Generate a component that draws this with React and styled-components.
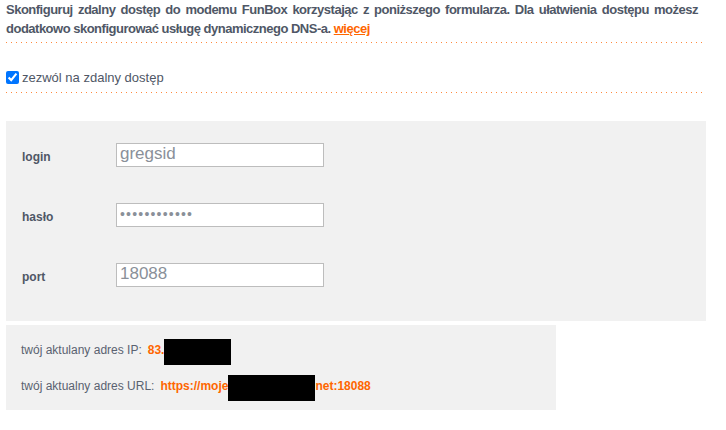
import React from "react";
import styled, { createGlobalStyle } from "styled-components";

const Global = createGlobalStyle`
  html, body { margin: 0; padding: 0; background: #fff; }
  body { font-family: "Liberation Sans", Arial, sans-serif; }
`;

const Page = styled.div`
  width: 726px;
  height: 430px;
  padding: 0 6px;
  box-sizing: border-box;
  overflow: hidden;
`;

const Intro = styled.p`
  margin: 0;
  width: 692px;
  font-size: 13px;
  font-weight: bold;
  line-height: 19px;
  letter-spacing: -0.5px;
  text-align: justify;
  color: #4f5766;
`;

const MoreLink = styled.a`
  color: #ff6600;
  text-decoration: underline;
`;

const Dotted = styled.div`
  width: 696px;
  height: 1px;
  margin-top: ${(p) => p.$top}px;
  background-image: linear-gradient(to right, #ff8a3d 1px, transparent 1px);
  background-size: 5px 1px;
  background-repeat: repeat-x;
`;

const CheckRow = styled.label`
  display: flex;
  align-items: center;
  gap: 3px;
  margin-top: 27px;
  font-size: 13px;
  color: #4f5766;
`;

const Check = styled.input`
  margin: 0;
  width: 13px;
  height: 13px;
  accent-color: #0075ff;
`;

const FormBox = styled.div`
  margin-top: 28px;
  width: 700px;
  height: 200px;
  box-sizing: border-box;
  background: #f1f1f1;
  padding: 22px 0 0 16px;
  display: flex;
  flex-direction: column;
  gap: 36px;
`;

const FieldRow = styled.div`
  display: flex;
  align-items: center;
`;

const FieldLabel = styled.span`
  width: 94px;
  font-size: 12px;
  font-weight: bold;
  color: #4f5766;
  padding-top: 4px;
`;

const TextField = styled.input`
  width: 208px;
  height: 24px;
  box-sizing: border-box;
  margin: 0;
  border: 1px solid #bdbdbd;
  background: #fff;
  padding: 0 0 3px 3px;
  font-family: "Liberation Sans", Arial, sans-serif;
  font-size: ${(p) => (p.type === "password" ? "14px" : "17px")};
  letter-spacing: ${(p) => (p.type === "password" ? "1.2px" : "0")};
  color: #8a9099;
  outline: none;
`;

const InfoBox = styled.div`
  margin-top: 4px;
  width: 550px;
  height: 85px;
  box-sizing: border-box;
  background: #f1f1f1;
  padding: 16px 0 0 15px;
  display: flex;
  flex-direction: column;
  gap: 18px;
`;

const InfoRow = styled.div`
  display: flex;
  align-items: center;
  height: 18px;
  font-size: 12px;
  color: #5a6270;
`;

const InfoValue = styled.span`
  margin-left: 6px;
  font-weight: bold;
  color: #ff6600;
  display: flex;
  align-items: center;
`;

const Redact = styled.span`
  display: inline-block;
  width: ${(p) => p.$w}px;
  height: 26px;
  background: #000;
  margin-top: ${(p) => p.$dy}px;
`;

export default function App() {
  return (
    <>
      <Global />
      <Page>
        <Intro>
          Skonfiguruj zdalny dostęp do modemu FunBox korzystając z poniższego formularza. Dla ułatwienia dostępu możesz
          dodatkowo skonfigurować usługę dynamicznego DNS-a. <MoreLink href="#">więcej</MoreLink>
        </Intro>
        <Dotted $top={4} />
        <CheckRow>
          <Check type="checkbox" defaultChecked />
          zezwól na zdalny dostęp
        </CheckRow>
        <Dotted $top={7} />
        <FormBox>
          <FieldRow>
            <FieldLabel>login</FieldLabel>
            <TextField type="text" defaultValue="gregsid" />
          </FieldRow>
          <FieldRow>
            <FieldLabel>hasło</FieldLabel>
            <TextField type="password" defaultValue="gregsidpass1" />
          </FieldRow>
          <FieldRow>
            <FieldLabel>port</FieldLabel>
            <TextField type="text" defaultValue="18088" />
          </FieldRow>
        </FormBox>
        <InfoBox>
          <InfoRow>
            twój aktulany adres IP:
            <InfoValue>
              83.
              <Redact $w={67} $dy={4} />
            </InfoValue>
          </InfoRow>
          <InfoRow>
            twój aktualny adres URL:
            <InfoValue>
              https://moje
              <Redact $w={87} $dy={4} />
              net:18088
            </InfoValue>
          </InfoRow>
        </InfoBox>
      </Page>
    </>
  );
}
